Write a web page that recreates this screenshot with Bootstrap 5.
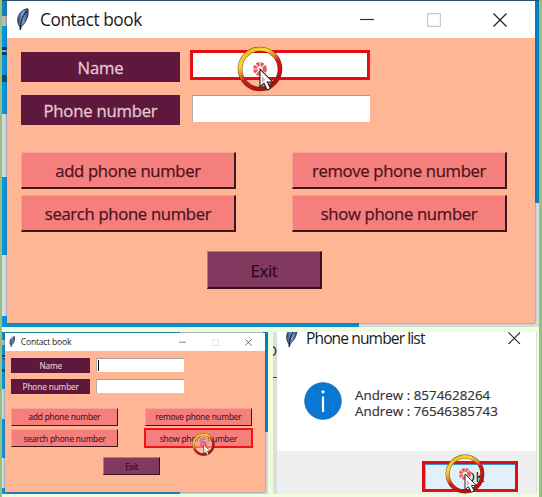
<!DOCTYPE html>
<html lang="en">
<head>
<meta charset="utf-8">
<meta name="viewport" content="width=device-width, initial-scale=1">
<title>Contact book</title>
<link href="https://cdn.jsdelivr.net/npm/bootstrap@5.3.0/dist/css/bootstrap.min.css" rel="stylesheet">
<style>
body{width:542px;height:497px;background:#92c183;font-family:"Open Sans","Noto Sans",sans-serif;color:#1b1b1b}
.sheet{left:2px;top:0;width:537px;height:497px;background:#eeffdd}
.desk{overflow:hidden}
.desk-main{left:0;top:0;width:537px;height:327px;background:linear-gradient(90deg,#0b8fcf 66.4%,#dcdcdc 66.4%)}
.desk-small{left:0;top:332px;width:266px;height:162px;background:linear-gradient(90deg,#0b8fcf 67%,#dcdcdc 67%)}
.desk-dialog{left:271px;top:332px;width:264px;height:162px;background:#dedede}
.side{width:5px;top:0;bottom:0;left:0;background:linear-gradient(#1681bd 0 5%,#bababa 5% 8%,#0894df 8% 14.5%,#0d3c5c 14.5% 15.2%,#5ab5e2 15.2% 16%,#0d3c5c 16% 16.700%,#0894df 16.700% 23%,#17455f 23% 25%,#0894df 25% 35%,#d6d8dc 35% 54%,#0894df 54% 78%,#dcdcdc 78% 96.500%,#0894df 96.500%)}
.side-r{right:0;top:0;bottom:0;width:5px;background:linear-gradient(#087fc4 62%,#d9dce0 62%)}
.edge{left:0;right:0;top:0;height:1px;background:#24506f}
.u1{--u:1px;left:5px;top:1px}
.u2{--u:.4943px;left:2.5px;top:1px}
.win{width:calc(528*var(--u));height:calc(322*var(--u));background:#ffb695;box-shadow:0 0 2px #3b5c70}
.bar{height:calc(37*var(--u));background:#fff;padding-left:calc(9*var(--u));padding-right:calc(28*var(--u))}
.feather{width:calc(13*var(--u));height:calc(23*var(--u))}
.ttl{font-size:calc(17.3*var(--u));letter-spacing:calc(-.42*var(--u));margin-left:calc(11*var(--u));line-height:1}
.ctl{width:calc(14*var(--u));height:calc(14*var(--u));overflow:visible}
.ctls{gap:calc(52.5*var(--u))}
.pane{padding:calc(14*var(--u)) calc(28*var(--u)) 0 calc(14*var(--u))}
.fields{display:grid;grid-template-columns:calc(159*var(--u)) calc(178*var(--u));column-gap:calc(12*var(--u));row-gap:calc(13*var(--u))}
.tag{height:calc(30*var(--u));background:#5e173d;color:#e6c8d3;font-size:calc(16.7*var(--u));letter-spacing:calc(-.22*var(--u));line-height:1;padding-top:calc(3*var(--u));-webkit-text-stroke:calc(.3*var(--u)) #e6c8d3}
.entry{height:calc(27*var(--u));background:#fff;border-top:calc(1.5*var(--u)) solid #a79c98;border-left:calc(1.5*var(--u)) solid #b9aaa4}
.entry.hot{border:3px solid #e60c12;margin:-2px 0 0 -2px;height:30px}
.caret{width:1.5px;height:11px;background:#111;margin:1px}
.acts{display:grid;grid-template-columns:repeat(2,calc(215*var(--u)));column-gap:calc(56*var(--u));row-gap:calc(6*var(--u));margin-top:calc(27*var(--u))}
.tk{height:calc(37*var(--u));background:#f57f7d;color:#4a141d;font-size:calc(16.7*var(--u));letter-spacing:calc(-.33*var(--u));line-height:1;border:0 solid;border-width:calc(1*var(--u)) calc(2*var(--u)) calc(2*var(--u)) calc(1*var(--u));border-color:#f7a098 #3c171c #3c171c #f7a098;border-radius:0;padding:calc(3*var(--u)) 0 0;white-space:nowrap;-webkit-text-stroke:calc(.25*var(--u)) #4a141d}
.tk.exit{width:calc(115*var(--u));height:calc(38*var(--u));background:#82395f;color:#220519;border-color:#b57984 #35101f #35101f #b57984;margin:calc(19*var(--u)) 0 0 calc(186*var(--u))}
.tk.picked{outline:2px solid #ee1519;outline-offset:-1px;border-color:transparent}
.click{pointer-events:none;overflow:visible}
.dlg{left:4px;top:0;width:259px;height:162px;background:#fff}
.dlg-bar{height:18px;padding:0 15px 0 8px}
.dlg-bar .ttl{font-size:15.6px;letter-spacing:-.9px;margin:-5px 0 0 8px}
.dlg-bar .feather{width:13px;height:23px;margin-top:-9px}
.msg{height:101px;padding:0 0 0 27px}
.msg-text{font-size:13.4px;line-height:16px;color:#333;margin:4px 0 0 13px;-webkit-text-stroke:.2px #333}
.foot{height:43px;background:#efefef;padding:10px 18px 0 0}
.ok{width:96px;height:31px;border:3px solid #dc1016;background:#e2f0fb;box-shadow:inset 0 1px #3b93d8,inset 1px 0 #7cb7e6;border-radius:0;font-size:15px;line-height:1;padding:0 0 0 8px;color:#222}
.bit{font-size:14px;line-height:1}
.dash{left:0;top:45px;width:4px;height:1px;background:#444}
</style>
</head>
<body class="position-relative overflow-hidden m-0">
<svg class="position-absolute" width="0" height="0">
  <defs>
    <linearGradient id="gold" x1="0" y1="0" x2=".6" y2="1"><stop offset=".1" stop-color="#f3b41b"/><stop offset=".3" stop-color="#ffd92e"/><stop offset=".48" stop-color="#f08a22"/><stop offset=".62" stop-color="#e01515"/><stop offset="1" stop-color="#b50d0d"/></linearGradient>
    <linearGradient id="quill" x1="0" y1="0" x2="1" y2="0"><stop offset="0" stop-color="#2c4a73"/><stop offset=".5" stop-color="#7fa3cf"/><stop offset="1" stop-color="#264067"/></linearGradient>
  </defs>
  <symbol id="feather" viewBox="0 0 13 23"><path d="M4.300 22 4 19C1.200 16 .8 10 3.500 6 5.500 2.800 8.500.8 12 .8 12.800 5.500 11.500 10.500 9 14.500L5.300 18.800z" fill="url(#quill)" stroke="#26364f" stroke-width=".9"/><path d="M4.300 22C4.200 15 6.500 8 10.500 3" fill="none" stroke="#182438" stroke-width="1.100"/></symbol>
  <symbol id="min" viewBox="0 0 14 14"><path d="M0 6.500h14" stroke="#333" stroke-width="1.200"/></symbol>
  <symbol id="max" viewBox="0 0 14 14"><path d="M.6.600h12.800v12.800H.6z" fill="none" stroke="#c8c8c8" stroke-width="1.100"/></symbol>
  <symbol id="close" viewBox="0 0 14 14"><path d="M.5.500l13 13M13.500.500l-13 13" stroke="#252525" stroke-width="1.300"/></symbol>
  <symbol id="pointer" viewBox="0 0 46 46">
    <circle cx="23" cy="23" r="20" fill="none" stroke="#55431c" stroke-width="4.600"/>
    <circle cx="23" cy="23" r="20" fill="none" stroke="url(#gold)" stroke-width="3.700"/>
    <circle cx="23" cy="23" r="4.800" fill="none" stroke="#ec5258" stroke-width="4.200" stroke-dasharray="2.770 1"/>
    <path d="M23 23v18l4-3.500 3.200 6.500 3.300-1.600-3.200-6.300h5.700z" fill="#fff" stroke="#222" stroke-width="1.100"/>
    <path d="M25 29v8l3-3z" fill="#e7a4a7"/>
  </symbol>
</svg>

<main class="sheet position-absolute">
  <section class="desk desk-main position-absolute">
    <div class="side position-absolute"></div><div class="side-r position-absolute"></div><div class="edge position-absolute"></div>
    <div class="win u1 position-absolute">
      <header class="bar d-flex align-items-center">
        <svg class="feather"><use href="#feather"/></svg><span class="ttl">Contact book</span>
        <div class="ctls d-flex ms-auto"><svg class="ctl"><use href="#min"/></svg><svg class="ctl"><use href="#max"/></svg><svg class="ctl"><use href="#close"/></svg></div>
      </header>
      <div class="pane">
        <div class="fields">
          <div class="tag d-flex align-items-center justify-content-center">Name</div><div class="entry hot"></div>
          <div class="tag d-flex align-items-center justify-content-center">Phone number</div><div class="entry"></div>
        </div>
        <div class="acts">
          <button class="tk">add phone number</button><button class="tk">remove phone number</button>
          <button class="tk">search phone number</button><button class="tk">show phone number</button>
        </div>
        <button class="tk exit">Exit</button>
      </div>
    </div>
    <svg class="click position-absolute" style="left:234.500px;top:46px" width="46" height="46"><path d="M11 8.500h24L39 16v15H7V16z" fill="#fff"/><use href="#pointer"/></svg>
  </section>

  <section class="desk desk-small position-absolute">
    <div class="side position-absolute"></div><div class="side-r position-absolute"></div>
    <div class="win u2 position-absolute">
      <header class="bar d-flex align-items-center">
        <svg class="feather"><use href="#feather"/></svg><span class="ttl">Contact book</span>
        <div class="ctls d-flex ms-auto"><svg class="ctl"><use href="#min"/></svg><svg class="ctl"><use href="#max"/></svg><svg class="ctl"><use href="#close"/></svg></div>
      </header>
      <div class="pane">
        <div class="fields">
          <div class="tag d-flex align-items-center justify-content-center">Name</div><div class="entry"><div class="caret"></div></div>
          <div class="tag d-flex align-items-center justify-content-center">Phone number</div><div class="entry"></div>
        </div>
        <div class="acts">
          <button class="tk">add phone number</button><button class="tk">remove phone number</button>
          <button class="tk">search phone number</button><button class="tk picked">show phone number</button>
        </div>
        <button class="tk exit">Exit</button>
      </div>
    </div>
    <svg class="click position-absolute" style="left:190px;top:100.500px" width="23" height="23"><circle cx="11.500" cy="11.500" r="9" fill="#ffd0c4" opacity=".45"/><use href="#pointer"/></svg>
  </section>

  <section class="desk desk-dialog position-absolute">
    <div class="bit position-absolute" style="left:-6px;top:12px">D</div>
    <div class="dash position-absolute"></div>
    <div class="dlg position-absolute">
      <header class="dlg-bar d-flex align-items-center">
        <svg class="feather flex-shrink-0"><use href="#feather"/></svg><span class="ttl">Phone number list</span>
        <svg class="ctl ms-auto" style="--u:.9px;margin-top:-5px"><use href="#close"/></svg>
      </header>
      <div class="msg d-flex align-items-center">
        <svg width="38" height="38" viewBox="0 0 38 38"><circle cx="19" cy="19" r="18.300" fill="#0878d4" stroke="#1e63a3" stroke-width=".8"/><path d="M19 14.500v15.500" stroke="#fff" stroke-width="2.200"/><circle cx="19" cy="9.800" r="1.600" fill="#fff"/></svg>
        <div class="msg-text"><div>Andrew : 8574628264</div><div>Andrew : 76546385743</div></div>
      </div>
      <footer class="foot d-flex justify-content-end"><button class="ok">OK</button></footer>
    </div>
    <svg class="click position-absolute" style="left:171.500px;top:122px" width="40" height="40"><circle cx="19" cy="20" r="7" fill="#e2f0fb"/><use href="#pointer"/></svg>
  </section>
</main>
<script src="https://cdn.jsdelivr.net/npm/bootstrap@5.3.0/dist/js/bootstrap.bundle.min.js"></script>
</body>
</html>
